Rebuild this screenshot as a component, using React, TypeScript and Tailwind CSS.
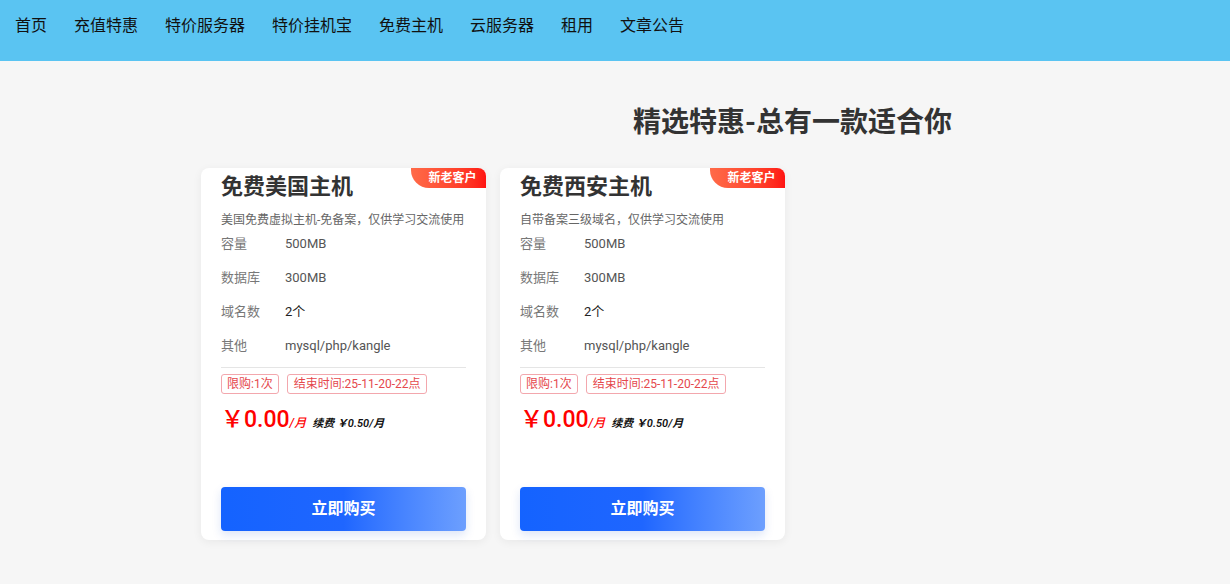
import React from 'react';

const navItems = ['首页', '充值特惠', '特价服务器', '特价挂机宝', '免费主机', '云服务器', '租用', '文章公告'];

const products = [
  {
    title: '免费美国主机',
    desc: '美国免费虚拟主机-免备案，仅供学习交流使用',
  },
  {
    title: '免费西安主机',
    desc: '自带备案三级域名，仅供学习交流使用',
  },
];

const specs = [
  { label: '容量', value: '500MB' },
  { label: '数据库', value: '300MB' },
  { label: '域名数', value: '2个', dark: true },
  { label: '其他', value: 'mysql/php/kangle' },
];

const ProductCard = ({ title, desc }: { title: string; desc: string }) => (
  <div className="relative w-[285px] h-[372px] bg-white rounded-lg shadow-[0_2px_10px_rgba(0,0,0,0.06)] px-5 flex flex-col">
    {/* badge */}
    <div className="absolute top-0 right-0 h-[20px] w-[75px] rounded-tr-lg rounded-bl-[18px] bg-gradient-to-r from-[#ff6a48] to-[#ff1212] flex items-center justify-center pl-2 text-[12px] font-bold text-white leading-none">
      新老客户
    </div>
    <h3 className="text-[22px] font-bold text-[#333] leading-[28px] mt-[5px]">{title}</h3>
    <p className="text-[12px] text-[#666] mt-[10px] leading-[18px]">{desc}</p>
    <div className="flex flex-col -mt-[2px]">
      {specs.map((s) => (
        <div key={s.label} className="flex items-center h-[34px] text-[13px] leading-[20px]">
          <span className="w-[64px] text-[#777]">{s.label}</span>
          <span className={s.dark ? 'text-[#222]' : 'text-[#555]'}>{s.value}</span>
        </div>
      ))}
    </div>
    <div className="border-t border-[#e5e5e5] mt-[4px]" />
    <div className="flex gap-[8px] mt-[6px]">
      <span className="border border-[#f3a7ad] rounded-[3px] px-[5px] h-[20px] flex items-center text-[12px] text-[#e5484d]">限购:1次</span>
      <span className="border border-[#f3a7ad] rounded-[3px] px-[6px] h-[20px] flex items-center text-[12px] text-[#e5484d]">结束时间:25-11-20-22点</span>
    </div>
    <div className="flex items-baseline mt-[9px]">
      <span className="text-[23px] font-medium text-[#ff0000] leading-[34px]">￥0.00</span>
      <span className="text-[12px] italic font-medium text-[#ff0000]">/月</span>
      <span className="text-[11px] italic font-semibold text-[#111] ml-[6px]">续费 ￥0.50/月</span>
    </div>
    <button className="mt-auto mb-[9px] h-[44px] w-full rounded-[4px] bg-gradient-to-r from-[#1463ff] via-[#1f66ff] to-[#6d9ffe] text-white text-[16px] font-bold shadow-[0_4px_10px_rgba(30,80,200,0.15)]">
      立即购买
    </button>
  </div>
);

export default function App() {
  return (
    <div className="min-h-[584px] bg-[#f6f6f6] font-[Roboto,'Noto_Sans_CJK_SC',sans-serif]">
      <nav className="h-[61px] bg-[#5ac4f2] flex items-start pt-[15px] pl-[15px] gap-[27px]">
        {navItems.map((n) => (
          <a key={n} className="text-[16px] text-[#111] leading-[22px]">{n}</a>
        ))}
      </nav>
      <h2 className="ml-[633px] mt-[44px] text-[28px] font-bold text-[#333] leading-[36px]">
        精选特惠-总有一款适合你
      </h2>
      <div className="flex gap-[14px] ml-[201px] mt-[27px]">
        {products.map((p) => (
          <ProductCard key={p.title} {...p} />
        ))}
      </div>
    </div>
  );
}
